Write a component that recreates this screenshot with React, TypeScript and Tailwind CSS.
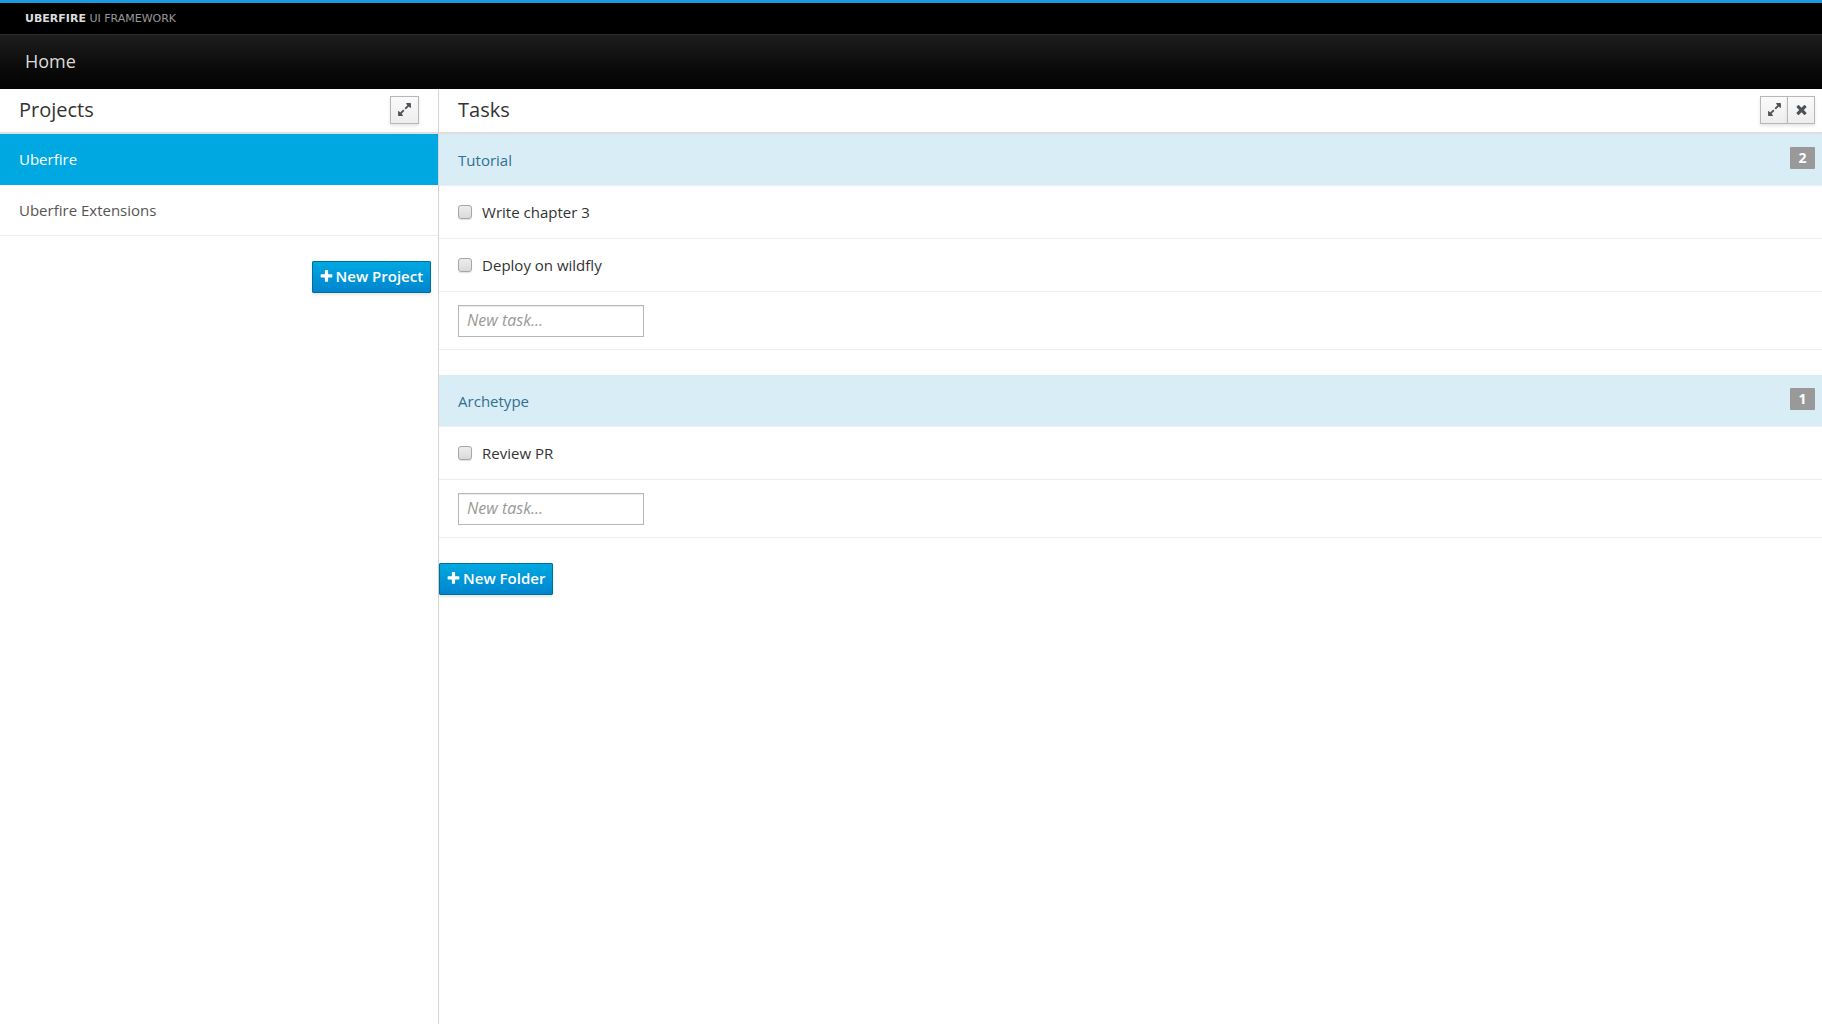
import { useState } from 'react';
import type { ReactNode } from 'react';
import { clsx } from 'clsx';

const ICON_PATHS = {
  plus: 'M1600 736v192q0 40-28 68t-68 28h-416v416q0 40-28 68t-68 28h-192q-40 0-68-28t-28-68v-416h-416q-40 0-68-28t-28-68v-192q0-40 28-68t68-28h416v-416q0-40 28-68t68-28h192q40 0 68 28t28 68v416h416q40 0 68 28t28 68z',
  times:
    'M1490 1322q0 40-28 68l-136 136q-28 28-68 28t-68-28l-294-294-294 294q-28 28-68 28t-68-28l-136-136q-28-28-28-68t28-68l294-294-294-294q-28-28-28-68t28-68l136-136q28-28 68-28t68 28l294 294 294-294q28-28 68-28t68 28l136 136q28 28 28 68t-28 68l-294 294 294 294q28 28 28 68z',
  expand:
    'M883 1056q0 13-10 23l-332 332 144 144q19 19 19 45t-19 45-45 19h-448q-26 0-45-19t-19-45v-448q0-26 19-45t45-19 45 19l144 144 332-332q10-10 23-10t23 10l114 114q10 10 10 23zm781-864v448q0 26-19 45t-45 19-45-19l-144-144-332 332q-10 10-23 10t-23-10l-114-114q-10-10-10-23t10-23l332-332-144-144q-19-19-19-45t19-45 45-19h448q26 0 45 19t19 45z',
};

const PROJECTS = ['Uberfire', 'Uberfire Extensions'];

const FOLDERS = [
  { name: 'Tutorial', tasks: ['Write chapter 3', 'Deploy on wildfly'] },
  { name: 'Archetype', tasks: ['Review PR'] },
];

function Icon({ name, className }: { name: keyof typeof ICON_PATHS; className?: string }) {
  return (
    <svg viewBox="0 0 1792 1792" fill="currentColor" aria-hidden="true" className={className}>
      <path d={ICON_PATHS[name]} />
    </svg>
  );
}

function ToolButton({ icon, label, className }: { icon: 'expand' | 'times'; label: string; className?: string }) {
  return (
    <button
      type="button"
      aria-label={label}
      className={clsx(
        'flex h-7 items-center justify-center border border-[#b7b7b7] bg-linear-to-b from-[#fafafa] to-[#ededed] text-[#4d5258] shadow-[0_2px_3px_rgba(0,0,0,0.1)]',
        className
      )}
    >
      <Icon name={icon} className="size-[15px]" />
    </button>
  );
}

function PrimaryButton({ children }: { children: ReactNode }) {
  return (
    <button
      type="button"
      className="flex h-8 items-center gap-0.5 rounded-[1px] border border-[#006e9c] bg-linear-to-b from-[#00a8e1] to-[#0085cf] pr-[7px] pb-0.5 pl-1.5 text-[15px] font-semibold text-white shadow-[0_2px_3px_rgba(0,0,0,0.1)]"
    >
      <Icon name="plus" className="size-[15px]" />
      {children}
    </button>
  );
}

function PanelHeader({ title, children }: { title: string; children: ReactNode }) {
  return (
    <div className="flex h-[45px] items-center justify-between border-b-2 border-[#dfdfdf] pr-[7px] pb-0.5 pl-[19px]">
      <h2 className="text-xl text-[#333]">{title}</h2>
      <div className="flex">{children}</div>
    </div>
  );
}

function Folder({ name, tasks }: { name: string; tasks: string[] }) {
  return (
    <section className="mb-[25px]">
      <div className="flex h-[52px] items-center justify-between border-b border-[#eee] bg-[#d9edf7] pr-[7px] pl-[19px]">
        <h3 className="pt-0.5 text-[#31708f]">{name}</h3>
        <span className="mb-1 flex h-[22px] w-[25px] items-center justify-center rounded-[1px] bg-[#999] text-sm font-bold text-white">
          {tasks.length}
        </span>
      </div>
      <ul>
        {tasks.map((task) => (
          <li key={task} className="flex h-[53px] items-center border-b border-[#eee] px-[19px]">
            <label className="flex items-center gap-[10px]">
              <input
                type="checkbox"
                className="size-[14px] appearance-none rounded-[3px] border border-[#a6a6a6] bg-linear-to-b from-[#ededed] to-[#dadada] shadow-[0_1px_1px_rgba(0,0,0,0.12)] checked:from-[#00a8e1] checked:to-[#0085cf]"
              />
              {task}
            </label>
          </li>
        ))}
      </ul>
      <div className="flex h-[58px] items-center border-b border-[#eee] px-[19px]">
        <input
          type="text"
          placeholder="New task..."
          aria-label={`New task in ${name}`}
          className="h-8 w-[186px] border border-[#b7b7b7] px-2 pb-0.5 text-base shadow-[inset_0_1px_1px_rgba(0,0,0,0.08)] placeholder:text-[#999] placeholder:italic"
        />
      </div>
    </section>
  );
}

export default function App() {
  const [selected, setSelected] = useState(PROJECTS[0]);

  return (
    <div className="flex min-h-screen flex-col bg-white font-['Open_Sans',sans-serif] text-[15px] text-[#333]">
      <header>
        <div className="flex h-[34px] items-center border-t-[3px] border-[#1a9be0] bg-black px-[25px] pt-px font-['DejaVu_Sans',sans-serif] text-[11px] text-[#999]">
          <a href="#">
            <b className="text-[#ddd]">UBERFIRE</b> UI FRAMEWORK
          </a>
        </div>
        <nav className="flex h-[55px] items-center border-t border-[#2b2b2b] bg-linear-to-b from-[#1d1d1d] to-[#030303] px-[25px] pb-0.5">
          <a href="#" className="text-lg text-[#dbdbdb]">
            Home
          </a>
        </nav>
      </header>

      <div className="flex flex-1">
        <aside className="w-[24.1%] shrink-0 border-r border-[#d5d5d5]">
          <PanelHeader title="Projects">
            <ToolButton icon="expand" label="Maximize projects" className="mr-3 w-[29px]" />
          </PanelHeader>
          <ul>
            {PROJECTS.map((project) => (
              <li key={project}>
                <button
                  type="button"
                  onClick={() => setSelected(project)}
                  className={clsx(
                    'h-[51px] w-full border-b px-[19px] text-left',
                    project === selected ? 'border-[#00a8e1] bg-[#00a8e1] text-white' : 'border-[#eee] text-[#555]'
                  )}
                >
                  {project}
                </button>
              </li>
            ))}
          </ul>
          <div className="mt-[25px] flex justify-end pr-[7px]">
            <PrimaryButton>New Project</PrimaryButton>
          </div>
        </aside>

        <main className="min-w-0 flex-1">
          <PanelHeader title="Tasks">
            <ToolButton icon="expand" label="Maximize tasks" className="w-[27px] border-r-0" />
            <ToolButton icon="times" label="Close tasks" className="w-7" />
          </PanelHeader>
          {FOLDERS.map((folder) => (
            <Folder key={folder.name} name={folder.name} tasks={folder.tasks} />
          ))}
          <PrimaryButton>New Folder</PrimaryButton>
        </main>
      </div>
    </div>
  );
}
